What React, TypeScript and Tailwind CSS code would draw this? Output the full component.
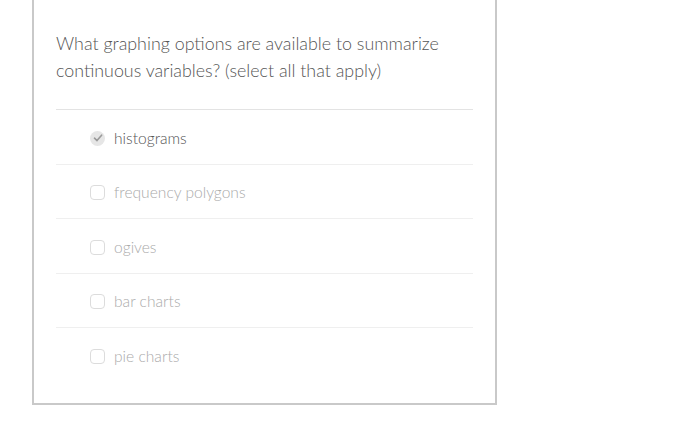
import React from "react";

const options = [
  { label: "histograms", checked: true },
  { label: "frequency polygons", checked: false },
  { label: "ogives", checked: false },
  { label: "bar charts", checked: false },
  { label: "pie charts", checked: false },
];

export default function App() {
  return (
    <div className="w-[700px] h-[426px] bg-white" style={{ fontFamily: "Lato, 'Open Sans', sans-serif" }}>
      <div className="ml-[32px] w-[465px] border-x-2 border-b-2 border-[#c9c9c9] pt-[30px] pb-[20px] px-[22px]">
        <p className="text-[17.85px] leading-[27px] font-light text-[#555]">
          What graphing options are available to summarize continuous variables? (select all that apply)
        </p>
        <div className="mt-[25px] border-t border-[#e3e3e3]">
          {options.map((o, i) => (
            <div
              key={o.label}
              className={`flex items-center h-[54.5px] pt-[3px] pl-[34px] ${i < options.length - 1 ? "border-b border-[#efefef]" : ""}`}
            >
              {o.checked ? (
                <span className="w-[15px] h-[15px] rounded-full bg-[#e6e6e6] flex items-center justify-center">
                  <svg width="10" height="10" viewBox="0 0 10 10">
                    <path d="M1.5 5.2 L4 7.6 L8.6 2.2" fill="none" stroke="#9a9a9a" strokeWidth="1.6" strokeLinecap="round" strokeLinejoin="round" />
                  </svg>
                </span>
              ) : (
                <span className="w-[15px] h-[15px] rounded-[4px] border border-[#dcdcdc] bg-white" />
              )}
              <span className={`ml-[9px] text-[15.6px] font-light ${o.checked ? "text-[#555]" : "text-[#aaa]"}`}>{o.label}</span>
            </div>
          ))}
        </div>
      </div>
    </div>
  );
}
